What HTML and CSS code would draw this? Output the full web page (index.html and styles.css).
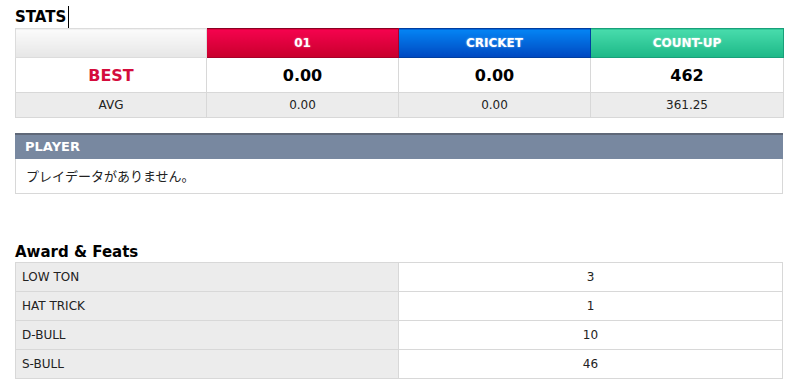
FILE: index.html
```html
<!DOCTYPE html>
<html lang="ja">
<head>
<meta charset="utf-8">
<link rel="stylesheet" href="styles.css">
</head>
<body>
<div class="page">
  <h2 class="title">STATS<span class="caret"></span></h2>
  <table class="stats">
    <colgroup><col class="c1"><col class="c2"><col class="c3"><col class="c4"></colgroup>
    <tr class="head">
      <th class="blank"></th>
      <th class="g01">01</th>
      <th class="cricket">CRICKET</th>
      <th class="countup">COUNT-UP</th>
    </tr>
    <tr class="best">
      <td class="label">BEST</td>
      <td>0.00</td>
      <td>0.00</td>
      <td>462</td>
    </tr>
    <tr class="avg">
      <td>AVG</td>
      <td>0.00</td>
      <td>0.00</td>
      <td>361.25</td>
    </tr>
  </table>

  <section class="player">
    <div class="player-head">PLAYER</div>
    <div class="player-body">プレイデータがありません。</div>
  </section>

  <h2 class="title award-title">Award &amp; Feats</h2>
  <table class="awards">
    <tr><td class="name">LOW TON</td><td class="val">3</td></tr>
    <tr><td class="name">HAT TRICK</td><td class="val">1</td></tr>
    <tr><td class="name">D-BULL</td><td class="val">10</td></tr>
    <tr><td class="name">S-BULL</td><td class="val">46</td></tr>
  </table>
</div>
</body>
</html>
```

FILE: styles.css
```css
* { box-sizing: border-box; }
html, body { margin: 0; padding: 0; background: #fff; }
body {
  font-family: "DejaVu Sans", Verdana, "Noto Sans CJK JP", sans-serif;
  color: #222;
}
.page {
  width: 768px;
  margin-left: 15px;
  padding-top: 6px;
}
.title {
  margin: 0;
  font-size: 15px;
  font-weight: bold;
  color: #000;
  line-height: 21px;
  display: flex;
  align-items: center;
}
.caret {
  display: inline-block;
  width: 1px;
  height: 22px;
  background: #000;
  margin-left: 2px;
}
.stats, .awards {
  width: 768px;
  border-collapse: collapse;
  table-layout: fixed;
}
.c1 { width: 191px; }
.c2 { width: 192px; }
.c3 { width: 192px; }
.c4 { width: 193px; }
.stats td, .stats th {
  border: 1px solid #d8d8d8;
  text-align: center;
  padding: 0;
}
.head th {
  height: 29px;
  font-size: 12px;
  font-weight: bold;
  color: #fff;
  text-shadow: 0 0 2px rgba(255,255,255,0.5);
}
.head .blank {
  background: linear-gradient(#fbfbfb, #e6e6e6);
  border-color: #dcdcdc;
}
.head .g01 {
  background: linear-gradient(#f5024e, #c8002c);
  border: 1px solid #a8002a;
  border-top-color: #8a0022;
}
.head .cricket {
  background: linear-gradient(#0484f4, #0048c0);
  border: 1px solid #003ea0;
}
.head .countup {
  background: linear-gradient(#48dcac, #1db887);
  border: 1px solid #18a07a;
}
.best td {
  height: 35px;
  font-size: 16px;
  font-weight: bold;
  color: #000;
  background: #fff;
}
.best td.label { color: #d40c3c; }
.avg td {
  height: 25px;
  font-size: 12px;
  background: #ececec;
  color: #222;
}

.player {
  margin-top: 15px;
  border: 1px solid #d8d8d8;
  border-top: none;
}
.player-head {
  height: 26px;
  background: #7888a0;
  border-top: 2px solid #5f6878;
  margin: 0 -1px;
  padding-left: 10px;
  color: #fff;
  font-weight: bold;
  font-size: 13px;
  line-height: 23px;
}
.player-body {
  height: 34px;
  padding-left: 10px;
  font-size: 13px;
  line-height: 34px;
  color: #222;
  font-family: "Noto Sans CJK JP", "DejaVu Sans", sans-serif;
}

.award-title {
  margin-top: 48px;
  font-size: 15px;
  line-height: 20px;
}
.awards td {
  border: 1px solid #d8d8d8;
  height: 29px;
  font-size: 12px;
  padding: 0;
}
.awards .name {
  width: 383px;
  background: #ececec;
  padding-left: 6px;
}
.awards .val {
  text-align: center;
  background: #fff;
}
```
